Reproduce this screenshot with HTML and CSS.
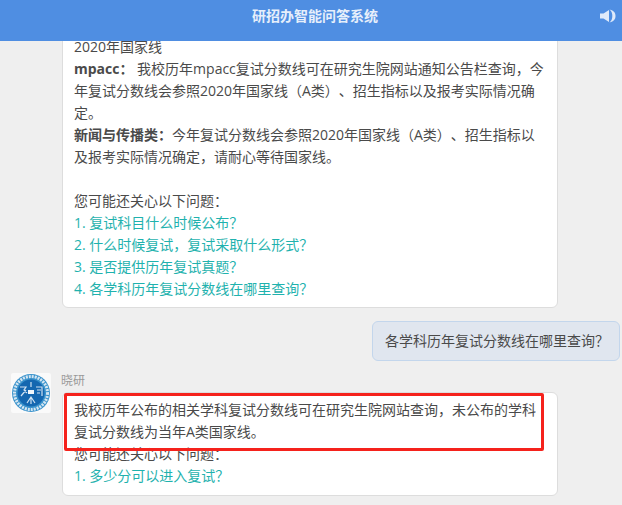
FILE: index.html
```html
<!DOCTYPE html>
<html lang="zh-CN">
<head>
<meta charset="utf-8">
<title>研招办智能问答系统</title>
<link rel="stylesheet" href="styles.css">
</head>
<body>
<header class="topbar">
  <h1 class="title">研招办智能问答系统</h1>
  <svg class="sound" width="17" height="14" viewBox="0 0 17 14"><path d="M0 4.500h3.500L9 1v12L3.500 9.500H0z" fill="#dfeafa"/><path d="M9.500.6C14 1.500 15.500 4 15.500 7s-1.500 5.500-6 6.400C12 11.500 12.300 9 12.300 7S12 2.500 9.500.6z" fill="#dfeafa"/></svg>
</header>
<main class="chat">
  <section class="msg bot-first">
    <div class="card card-first">
      <p>2020年国家线</p>
      <p><b>mpacc：</b>&nbsp;我校历年mpacc复试分数线可在研究生院网站通知公告栏查询，今年复试分数线会参照2020年国家线（A类）、招生指标以及报考实际情况确定。</p>
      <p><b>新闻与传播类：</b>今年复试分数线会参照2020年国家线（A类）、招生指标以及报考实际情况确定，请耐心等待国家线。</p>
      <p>&nbsp;</p>
      <p>您可能还关心以下问题：</p>
      <p class="link">1. 复试科目什么时候公布？</p>
      <p class="link">2. 什么时候复试，复试采取什么形式？</p>
      <p class="link">3. 是否提供历年复试真题？</p>
      <p class="link">4. 各学科历年复试分数线在哪里查询？</p>
    </div>
  </section>
  <section class="msg user">
    <div class="user-bubble">各学科历年复试分数线在哪里查询？</div>
  </section>
  <section class="msg bot">
    <svg class="avatar" width="40" height="40" viewBox="0 0 40 40">
      <rect width="40" height="40" rx="2" fill="#fafafa"/>
      <circle cx="20" cy="20" r="19" fill="#3a93cc"/>
      <circle cx="20" cy="20" r="16.500" fill="none" stroke="#d5e6f2" stroke-width="3" stroke-dasharray="2 1"/>
      <circle cx="20" cy="20" r="13.500" fill="#1467b0"/>
      <path d="M9 14h6l-2 3 3 3M10 23l5-6M25 14h6v9M26 17h4M26 20h3M20 9v5M20 24v7M16 30l4-6 4 6" stroke="#cfe2f2" stroke-width="1.200" fill="none"/>
      <rect x="17" y="17" width="6" height="4" fill="#f0f6fb"/>
    </svg>
    <div class="bot-body">
      <div class="name">晓研</div>
      <div class="card card-last">
        <p>我校历年公布的相关学科复试分数线可在研究生院网站查询，未公布的学科复试分数线为当年A类国家线。</p>
        <p>您可能还关心以下问题：</p>
        <p class="link">1. 多少分可以进入复试？</p>
        <div class="highlight"></div>
      </div>
    </div>
  </section>
</main>
</body>
</html>
```
FILE: styles.css
```css
* { box-sizing: border-box; }
html, body { height: 100%; }
body {
  margin: 0;
  display: flex;
  flex-direction: column;
  height: 505px;
  overflow: hidden;
  background: #efefef;
  color: #4a4a4a;
  font: 14px/22px "Open Sans", "Noto Sans CJK SC", sans-serif;
  text-spacing-trim: space-all;
}
.topbar {
  flex: none;
  height: 41px;
  background: #4f8ee2;
  display: flex;
  align-items: flex-start;
  justify-content: center;
  padding: 5px 0 0 8px;
  position: relative;
  z-index: 2;
}
.title {
  margin: 0;
  color: #e6effb;
  font-size: 14px;
  font-weight: 700;
  line-height: 22px;
}
.sound { position: absolute; right: 5px; top: 9px; }
.chat {
  flex: 1;
  min-height: 0;
  overflow: hidden;
  display: flex;
  flex-direction: column;
  justify-content: flex-end;
  padding: 0 2px 9px 11px;
}
.msg { flex: none; }
.card {
  position: relative;
  background: #fff;
  border: 1px solid #ddd;
  border-radius: 6px;
  padding: 8px 11px;
}
.card-first { padding-bottom: 7px; }
.card-last { padding-top: 6px; }
.card p { margin: 0; height: 22px; }
.card p:nth-child(2), .card p:nth-child(3) { height: auto; }
.card-last p:first-child { height: auto; }
.bot-first { margin-left: 51px; width: 496px; }
.link { color: #1fb2ae; }
.user {
  display: flex;
  justify-content: flex-end;
  margin-top: 13px;
}
.user-bubble {
  width: 248px;
  height: 40px;
  padding: 8px 12px;
  background: #e0e6ef;
  border: 1px solid #c3d6ec;
  border-radius: 6px;
  white-space: nowrap;
}
.bot { display: flex; gap: 11px; margin-top: 11px; width: 547px; }
.avatar { flex: none; margin-top: 1px; }
.bot-body { flex: 1; min-width: 0; }
.name { color: #999; font-size: 12px; line-height: 18px; height: 20px; margin-left: -1px; }
.highlight {
  position: absolute;
  left: 1px;
  top: 0;
  width: 480px;
  height: 58px;
  border: 3px solid #f5221c;
  border-radius: 2px;
}
```
